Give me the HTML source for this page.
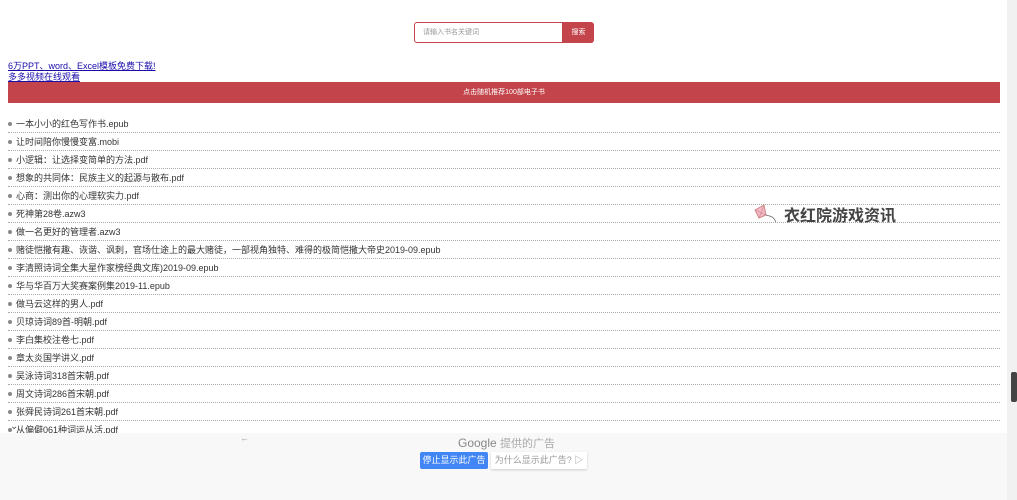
<!DOCTYPE html>
<html><head><meta charset="utf-8"><style>
body{margin:0;width:1017px;height:500px;overflow:hidden;background:#fff;font-family:"Liberation Sans","Noto Sans CJK SC",sans-serif;position:relative}
.search{position:absolute;left:414px;top:22px;width:149px;height:21px;border:1px solid #c3444a;border-radius:3px 0 0 3px;box-sizing:border-box;font-size:7px;color:#999;line-height:19px;padding-left:8px}
.btn{position:absolute;left:563px;top:22px;width:31px;height:21px;background:#c3444a;border-radius:0 3px 3px 0;color:#fff;font-size:7px;line-height:21px;text-align:center}
.links{position:absolute;left:8px;top:61px;font-size:9px;line-height:10.5px}
.links a{color:#1a0dab;text-decoration:underline;display:block}
.bar{position:absolute;left:8px;top:82px;width:992px;height:21px;background:#c3444a;color:#fff;font-size:7px;line-height:21px;text-align:center}
ul{position:absolute;left:8px;top:115px;width:992px;margin:0;padding:0;list-style:none}
li{height:17px;border-bottom:1px dotted #aaa;font-size:9px;line-height:18px;color:#333;white-space:nowrap}
li:before{content:"";display:inline-block;width:4px;height:4px;border-radius:50%;background:#888;margin-right:4px;vertical-align:1px}
.sb{position:absolute;left:1007px;top:0;width:10px;height:500px;background:#f1f1f1}
.thumb{position:absolute;left:1011px;top:372px;width:6px;height:30px;background:#444;border-radius:2px}
.ad{position:absolute;left:0;top:433px;width:1007px;height:67px;background:#f8f8f9}
.wm{position:absolute;left:784px;top:202px;font-size:16px;font-weight:bold;color:#444}
</style></head><body>
<div class="search">请输入书名关键词</div><div class="btn">搜索</div>
<div class="links"><a>6万PPT、word、Excel模板免费下载!</a><a>多多视频在线观看</a></div>
<div class="bar">点击随机推荐100部电子书</div>
<ul>
<li>一本小小的红色写作书.epub</li>
<li>让时间陪你慢慢变富.mobi</li>
<li>小逻辑：让选择变简单的方法.pdf</li>
<li>想象的共同体：民族主义的起源与散布.pdf</li>
<li>心商：测出你的心理软实力.pdf</li>
<li>死神第28卷.azw3</li>
<li>做一名更好的管理者.azw3</li>
<li>赌徒恺撒有趣、诙谐、讽刺，官场仕途上的最大赌徒，一部视角独特、难得的极简恺撒大帝史2019-09.epub</li>
<li>李清照诗词全集大星作家榜经典文库)2019-09.epub</li>
<li>华与华百万大奖赛案例集2019-11.epub</li>
<li>做马云这样的男人.pdf</li>
<li>贝琼诗词89首-明朝.pdf</li>
<li>李白集校注卷七.pdf</li>
<li>章太炎国学讲义.pdf</li>
<li>吴泳诗词318首宋朝.pdf</li>
<li>周文诗词286首宋朝.pdf</li>
<li>张舜民诗词261首宋朝.pdf</li>
<li>从偏僻061种词运从活.pdf</li>
</ul>
<svg style="position:absolute;left:752px;top:204px" width="26" height="24" viewBox="0 0 26 24"><path d="M3 6 L12 1 L14 11 L7 14 Z" fill="#f2b8c6" stroke="#c88" stroke-width="1"/><path d="M3 6 L14 11 M12 1 L7 14" stroke="#c88" stroke-width=".6"/><path d="M14 11 Q18 12 20 13 T24 18" fill="none" stroke="#666" stroke-width=".7"/></svg>
<div class="wm">衣红院游戏资讯</div>
<div class="ad">
<div style="position:absolute;left:10px;top:-12px;font-size:10px;color:#555">⌄</div>
<div style="position:absolute;left:240px;top:0;font-size:9px;color:#999">←</div>
<div style="position:absolute;left:458px;top:2px;font-size:12px;color:#888">Google <span style="font-size:11px;color:#aaa">提供的广告</span></div>
<div style="position:absolute;left:420px;top:19px;width:68px;height:17px;background:#4285f4;color:#fff;font-size:9px;line-height:17px;text-align:center;border-radius:2px">停止显示此广告</div>
<div style="position:absolute;left:491px;top:19px;width:96px;height:17px;background:#fff;color:#999;font-size:9px;line-height:17px;text-align:center;box-shadow:0 1px 2px #ccc">为什么显示此广告? ▷</div>
</div>
<div class="sb"></div><div class="thumb"></div>
</body></html>
